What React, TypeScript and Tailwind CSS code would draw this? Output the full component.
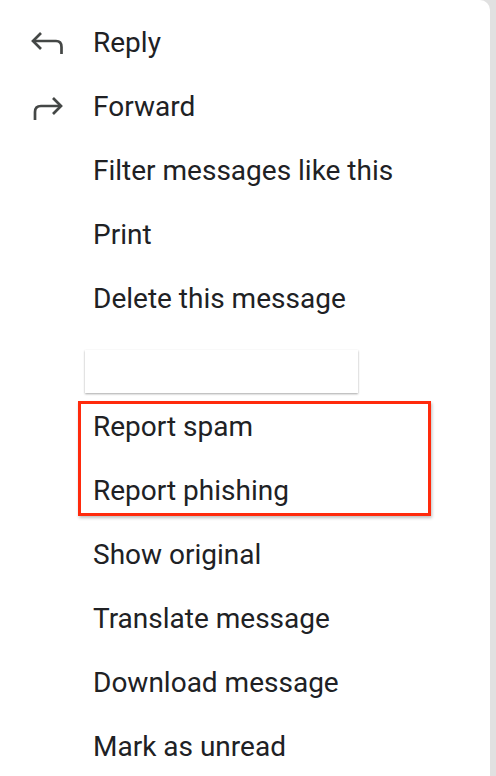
import React from "react";

type Item = { label: string; icon?: "reply" | "forward" };

const top: Item[] = [
  { label: "Reply", icon: "reply" },
  { label: "Forward", icon: "forward" },
  { label: "Filter messages like this" },
  { label: "Print" },
  { label: "Delete this message" },
];

const bottom: Item[] = [
  { label: "Report spam" },
  { label: "Report phishing" },
  { label: "Show original" },
  { label: "Translate message" },
  { label: "Download message" },
  { label: "Mark as unread" },
];

function RowIcon({ icon }: { icon?: Item["icon"] }) {
  if (!icon) return null;
  return (
    <svg width="93" height="64" viewBox="0 0 93 64" fill="none">
      {icon === "reply" ? (
        <g stroke="#444746" strokeWidth="2.7" strokeLinejoin="miter">
          <path d="M33 30 L56 30 Q61.5 30 61.5 36 L61.5 43" />
          <path d="M41 22 L33 30 L41 38" />
        </g>
      ) : (
        <g stroke="#444746" strokeWidth="2.7" strokeLinejoin="miter">
          <path d="M35 45 L35 37 Q35 31 41 31 L61 31" />
          <path d="M53 23 L61 31 L53 39" />
        </g>
      )}
    </svg>
  );
}

function Row({ item }: { item: Item }) {
  return (
    <div className="flex h-16 items-center">
      <div className="h-16 w-[93px] shrink-0">
        <RowIcon icon={item.icon} />
      </div>
      <span className="text-[28px] leading-none text-[#202124]">{item.label}</span>
    </div>
  );
}

export default function App() {
  return (
    <div
      className="flex h-[776px] w-[496px] overflow-hidden bg-[#e1e1e1]"
      style={{ fontFamily: "Roboto, 'Noto Sans', Arial, sans-serif" }}
    >
      <div className="relative w-[490px] rounded-tr-[10px] bg-white pt-[11px]">
        {top.map((it) => (
          <Row key={it.label} item={it} />
        ))}

        {/* blank field */}
        <div className="h-16 pt-[19px]">
          <div className="ml-[85px] h-[43px] w-[273px] bg-white shadow-[0_1px_2px_rgba(0,0,0,0.35)]" />
        </div>

        {bottom.map((it) => (
          <Row key={it.label} item={it} />
        ))}

        {/* highlight */}
        <div className="absolute left-[78px] top-[401px] h-[115px] w-[353px] border-[3px] border-[#ff2a0c] shadow-[1px_2px_3px_rgba(0,0,0,0.25)]" />
      </div>
    </div>
  );
}
